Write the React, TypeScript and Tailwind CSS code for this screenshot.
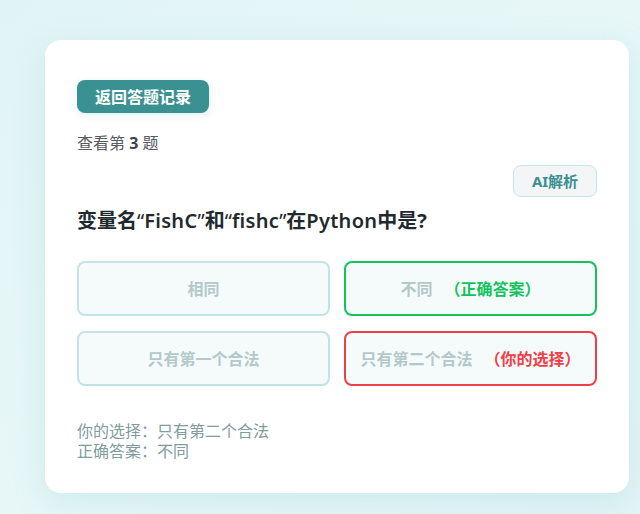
export default function App() {
  const options = [
    { text: '相同', state: 'none' },
    { text: '不同', state: 'correct' },
    { text: '只有第一个合法', state: 'none' },
    { text: '只有第二个合法', state: 'mine' },
  ]

  return (
    <div
      className="min-h-[514px] w-[640px] overflow-hidden bg-gradient-to-br from-[#e1f4f5] via-[#e7f7f8] to-[#e3f4f6] pt-[40px] pl-[45px]"
      style={{ fontFamily: '"Noto Sans", "Noto Sans CJK SC", sans-serif' }}
    >
      <div className="w-[584px] rounded-2xl bg-white px-8 pt-10 pb-[32px] shadow-[0_8px_32px_rgba(120,190,195,0.22)]">
        <button
          type="button"
          className="h-[33px] rounded-lg bg-[#3b9191] px-[18px] text-[16px] font-bold leading-none text-white shadow-[0_2px_8px_rgba(59,145,145,0.15)]"
        >
          返回答题记录
        </button>
        <p className="mt-[20px] text-[16px] leading-5 text-[#555b61]">
          查看第 <span className="font-bold text-[#3d4450]">3</span> 题
        </p>
        <div className="mt-[12px] flex justify-end">
          <button
            type="button"
            className="h-[32px] w-[84px] rounded-lg border border-[#c6e5ea] bg-[#f3f5f7] text-[15px] font-bold leading-none text-[#3b8f92]"
          >
            AI解析
          </button>
        </div>
        <h2 className="mt-[10px] text-[20px] font-bold leading-7 text-[#1f2a2e]">
          变量名<span className="font-normal">“</span>
          <span className="font-semibold tracking-[0.3px]">FishC</span>
          <span className="font-normal">”</span>和<span className="font-normal">“</span>
          <span className="font-semibold tracking-[0.3px]">fishc</span>
          <span className="font-normal">”</span>在<span className="font-semibold tracking-[0.3px]">Python</span>中是?
        </h2>
        <div className="mt-[26px] grid grid-cols-2 gap-x-[14px] gap-y-[15px]">
          {options.map((o) => (
            <div
              key={o.text}
              className={`flex h-[55px] items-center justify-center rounded-lg border-2 bg-[#f5fbfb] text-[16px] font-bold text-[#b3c9c9] ${
                o.state === 'correct'
                  ? 'border-[#12c25b]'
                  : o.state === 'mine'
                    ? 'border-[#ef3f48]'
                    : 'border-[#c3e4e7]'
              }`}
            >
              {o.text}
              {o.state === 'correct' ? (
                <span className="ml-3 font-bold text-[#12c25b]">（正确答案）</span>
              ) : null}
              {o.state === 'mine' ? (
                <span className="ml-3 font-bold text-[#ef3f48]">（你的选择）</span>
              ) : null}
            </div>
          ))}
        </div>
        <div className="mt-[35px] text-[16px] leading-5 text-[#7f9c9e]">
          <p>你的选择：只有第二个合法</p>
          <p>正确答案：不同</p>
        </div>
      </div>
    </div>
  )
}
